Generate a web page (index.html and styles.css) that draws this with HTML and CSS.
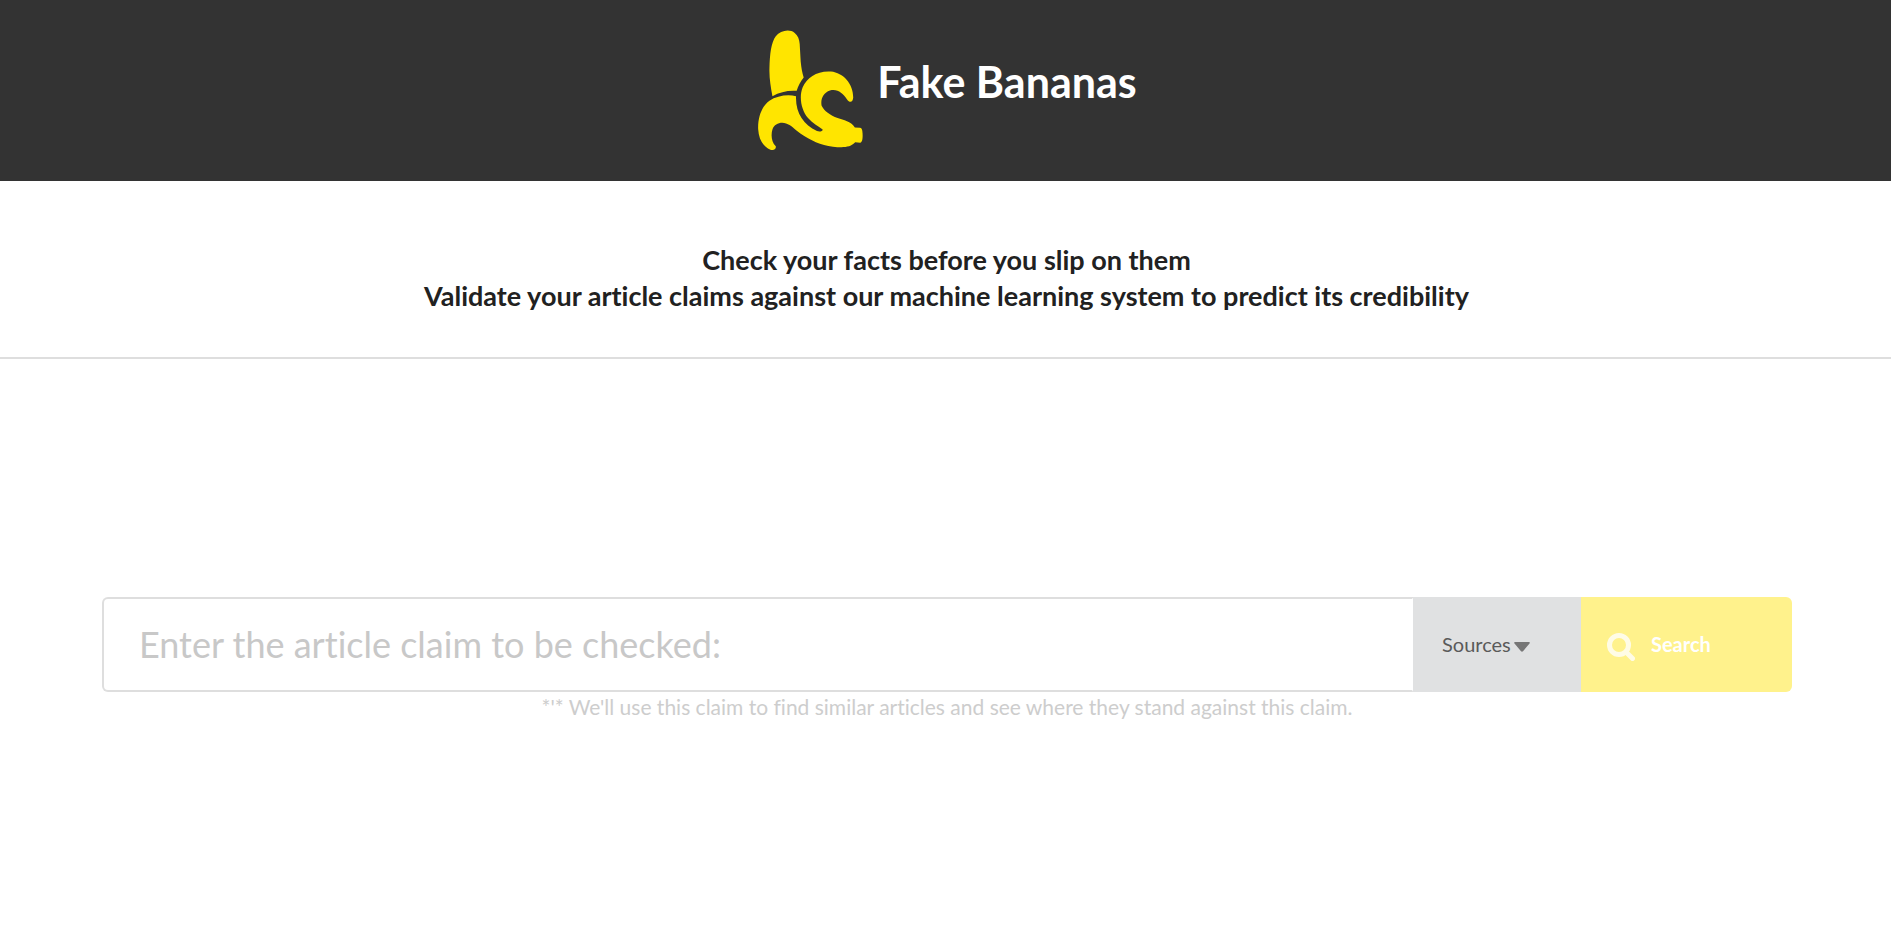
FILE: index.html
```
<!DOCTYPE html>
<html lang="en">
<head>
    <meta charset="UTF-8" />
    <meta name="viewport" content="width=device-width, initial-scale=1.0">
    <title>Fake Bananas</title>
    <link rel="stylesheet" href="styles.css">
</head>
<body>

    <header class="topbar">
        <svg class="logo" viewBox="54 60 315 361" aria-hidden="true">
            <path d="M97 259 C92 232 87 203 88 175 C89 133 93 98 107 79 C121 61 149 56 164 69 C174 78 178 88 179 102 L182 155 C184 176 187 190 191 203 C182 215 174 228 170 243 C143 241 119 247 97 259 Z" />
            <path d="M168 259 C142 253 110 258 88 273 C65 290 53 320 54 358 C56 391 70 412 91 420 C101 424 109 417 107 410 C94 396 92 376 97 359 C103 342 121 336 138 341 C153 345 162 358 181 371 C212 392 242 406 279 411 C306 414 331 415 346 398 L361 399 C368 398 369 383 368 370 C368 358 364 353 359 354 L345 353 C332 335 312 331 293 325 C271 317 252 303 245 288 C241 268 250 249 270 242 C293 236 308 250 321 268 C330 281 339 277 340 263 C340 221 310 189 273 185 C232 182 201 203 188 232 C176 262 184 301 204 325 C217 341 235 350 248 359 C249 364 240 367 231 364 C190 345 166 309 168 259 Z" />
        </svg>
        <h1>Fake Bananas</h1>
    </header>

    <div class="intro">
        <h2>Check your facts before you slip on them<br>Validate your article claims against our machine learning system to predict its credibility</h2>
    </div>

    <main class="container">
        <form class="search-form" id="claimForm">
            <input type="text" id="claim" class="claim-input" aria-label="Article claim" placeholder="Enter the article claim to be checked:" />

            <div class="sources">
                <select id="sources" aria-label="Sources">
                    <option>Sources</option>
                </select>
                <svg class="caret" viewBox="0 0 16 10" aria-hidden="true">
                    <path d="M1 0h14c1 0 1 1 .5 1.500L9 9.300c-.6.600-1.400.600-2 0L.5 1.500C0 1 0 0 1 0z" />
                </svg>
            </div>

            <button type="submit" class="search-btn">
                <svg class="search-icon" viewBox="0 0 28 28" aria-hidden="true">
                    <circle cx="12" cy="12" r="9.500" />
                    <path d="M19 19l6.500 6.500" />
                </svg>
                Search
            </button>
        </form>
        <p class="note">*'* We'll use this claim to find similar articles and see where they stand against this claim.</p>
    </main>

</body>
</html>
```

FILE: styles.css
```
* {
    box-sizing: border-box;
}

body {
    font-family: Lato, "Liberation Sans", sans-serif;
    font-variant-ligatures: none;
    background: #fff;
    margin: 0;
    color: #212121;
}

.topbar {
    display: flex;
    justify-content: center;
    gap: 14px;
    padding: 30px 0 31px 4px;
    background: #333;
}

.logo {
    width: 105px;
    height: 120px;
    fill: #ffe500;
}

h1 {
    margin: 24px 0 0;
    font-size: 43px;
    line-height: 56px;
    color: #fff;
}

.intro {
    padding: 61px 0 43px 2px;
    border-bottom: 2px solid #dedede;
    text-align: center;
}

h2 {
    margin: 0;
    font-size: 27px;
    font-weight: 700;
    line-height: 36px;
}

.container {
    padding: 238px 99px 0 102px;
}

.search-form {
    display: flex;
    height: 95px;
}

.claim-input {
    flex: 1;
    min-width: 0;
    padding: 0 35px 2px;
    font-family: inherit;
    font-size: 36px;
    font-variant-ligatures: none;
    color: #212121;
    border: 2px solid #dedede;
    border-right: 1px solid transparent;
    border-radius: 6px 0 0 6px;
    outline: none;
}

.claim-input::placeholder {
    color: #c8c8c8;
}

.sources {
    position: relative;
    width: 168px;
}

.sources select {
    width: 100%;
    height: 100%;
    padding: 0 29px 2px;
    appearance: none;
    border: none;
    border-radius: 0;
    background: #e0e1e2;
    color: #5a5a5a;
    font-family: inherit;
    font-size: 20px;
    cursor: pointer;
}

.caret {
    position: absolute;
    top: 45px;
    left: 101px;
    width: 16px;
    height: 10px;
    fill: #767676;
    pointer-events: none;
}

.search-btn {
    display: flex;
    align-items: center;
    gap: 16px;
    width: 211px;
    padding: 0 26px 2px;
    border: none;
    border-radius: 0 6px 6px 0;
    background: #fff28c;
    color: #fff;
    font-family: inherit;
    font-size: 20px;
    font-weight: 700;
    cursor: pointer;
}

.search-icon {
    width: 28px;
    height: 28px;
    margin-top: 6px;
    fill: none;
    stroke: #fffce6;
    stroke-width: 5;
    stroke-linecap: round;
}

.note {
    margin: 0;
    font-size: 21px;
    line-height: 30px;
    text-align: center;
    color: #cdcdcd;
}
```
